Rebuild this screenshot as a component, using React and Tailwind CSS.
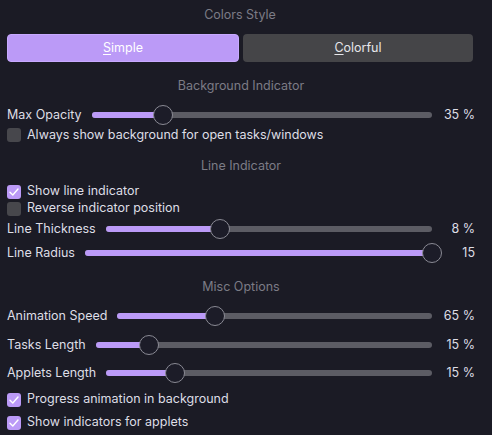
import React from 'react';

const font = { fontFamily: 'Inter, "Noto Sans", sans-serif' };

const Header = ({ children, className = '' }) => (
  <div className={`h-[20px] flex items-center justify-center text-[12.5px] text-[#7c7c86] ${className}`}>
    {children}
  </div>
);

const Slider = ({ label, value, pos, className = '' }) => (
  <div className={`h-[22px] flex items-center ${className}`}>
    <span className="text-[12.5px] text-[#dedee6] whitespace-nowrap">{label}</span>
    <div className="relative flex-1 ml-[10px] h-[6px] rounded-full bg-[#5c5c64]">
      <div className="absolute left-0 top-0 h-full rounded-full bg-[#bb9af7]" style={{ width: `${pos * 100}%` }} />
      <div
        className="absolute top-1/2 w-[20px] h-[20px] -translate-x-1/2 -translate-y-1/2 rounded-full bg-[#1c1c28] border-[1.5px] border-[#8a8a94]"
        style={{ left: `${pos * 100}%` }}
      />
    </div>
    <span className="w-[32px] ml-[11px] text-right text-[12.5px] text-[#dedee6] whitespace-nowrap">{value}</span>
  </div>
);

const Check = ({ label, checked, className = '' }) => (
  <div className={`h-[17px] flex items-center gap-[6px] ${className}`}>
    <div className={`w-[14px] h-[14px] rounded-[3px] flex items-center justify-center ${checked ? 'bg-[#bb9af7]' : 'bg-[#47474c]'}`}>
      {checked && (
        <svg width="12" height="12" viewBox="0 0 12 12" fill="none">
          <path d="M2 6.2 L4.8 9 L10 3" stroke="#ffffff" strokeWidth="1.4" strokeLinecap="round" strokeLinejoin="round" />
        </svg>
      )}
    </div>
    <span className="text-[12.5px] text-[#dedee6] whitespace-nowrap">{label}</span>
  </div>
);

export default function App() {
  return (
    <div className="w-[492px] h-[435px] bg-[#1b1b25] overflow-hidden pl-[7px] pr-[17px]" style={font}>
      <div className="h-[31px] flex items-center justify-center text-[12.5px] text-[#7c7c86] pr-[2px]">Colors Style</div>

      {/* Style toggle */}
      <div className="mt-[3px] h-[28px] flex gap-[4px] pr-[2px]">
        <button className="flex-1 rounded-[4px] bg-[#bb9af7] border border-[#c7a9ff] text-[12.5px] text-white">
          <span className="underline underline-offset-2">S</span>imple
        </button>
        <button className="flex-1 rounded-[4px] bg-[#454548] text-[12.5px] text-[#e6e6ea]">
          <span className="underline underline-offset-2">C</span>olorful
        </button>
      </div>

      <Header className="mt-[14px]">Background Indicator</Header>
      <Slider className="mt-[8px]" label="Max Opacity" value="35 %" pos={0.21} />
      <Check label="Always show background for open tasks/windows" className="h-[18px]" />

      <Header className="mt-[12px]">Line Indicator</Header>
      <Check className="mt-[7px]" label="Show line indicator" checked />
      <Check label="Reverse indicator position" />
      <Slider className="mt-[1px]" label="Line Thickness" value="8 %" pos={0.35} />
      <Slider className="mt-[2px]" label="Line Radius" value="15" pos={1} />

      <Header className="mt-[13px]">Misc Options</Header>
      <Slider className="mt-[8px]" label="Animation Speed" value="65 %" pos={0.31} />
      <Slider className="mt-[7px]" label="Tasks Length" value="15 %" pos={0.16} />
      <Slider className="mt-[6px]" label="Applets Length" value="15 %" pos={0.21} />
      <Check className="mt-[7px]" label="Progress animation in background" checked />
      <Check className="mt-[6px]" label="Show indicators for applets" checked />
    </div>
  );
}
